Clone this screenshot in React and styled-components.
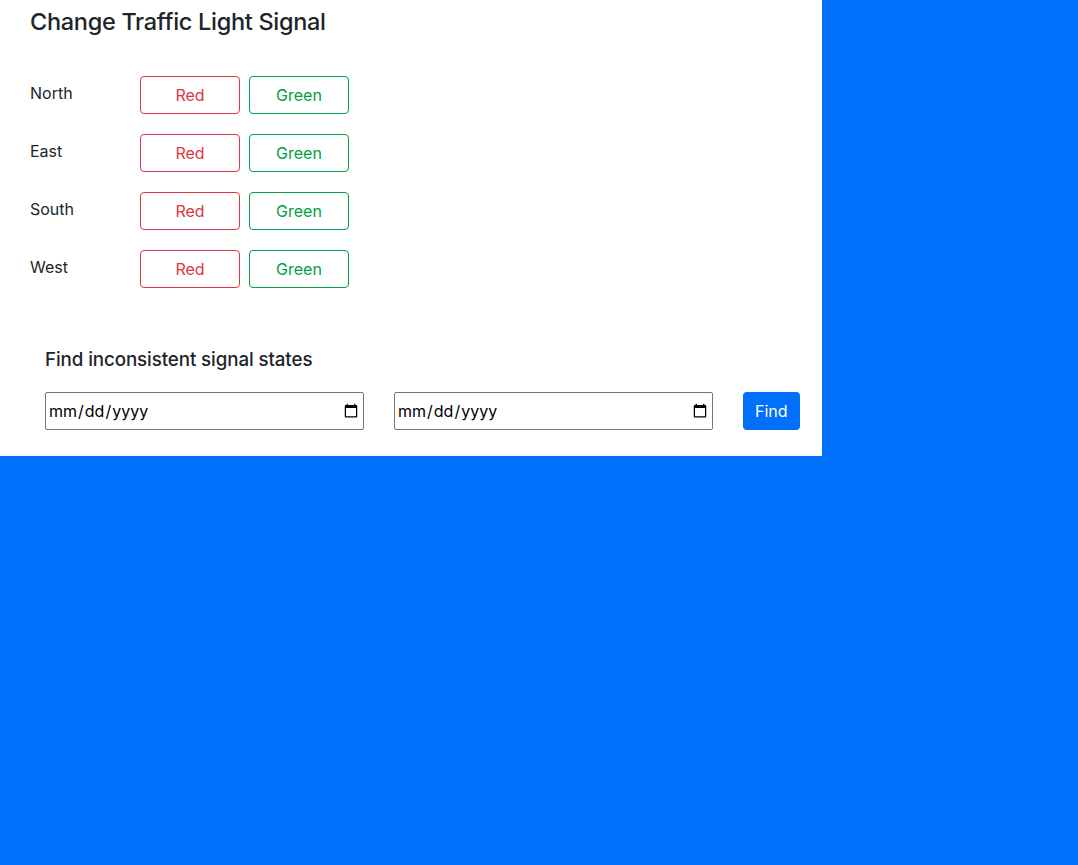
import styled, { createGlobalStyle } from 'styled-components';

const GlobalStyle = createGlobalStyle`
  html, body {
    margin: 0;
    padding: 0;
    background: #0070fa;
    font-family: Inter, "Liberation Sans", sans-serif;
    color: #212529;
  }
`;

const Panel = styled.div`
  width: 822px;
  background: #fff;
  box-sizing: border-box;
  padding: 8px 0 26px 30px;
`;

const Title = styled.h1`
  margin: 0 0 40px;
  font-size: 23.5px;
  font-weight: 500;
  line-height: 28px;
  letter-spacing: -0.3px;
`;

const SignalList = styled.div`
  display: flex;
  flex-direction: column;
  gap: 20px;
`;

const SignalRow = styled.div`
  display: flex;
  align-items: flex-start;
`;

const Direction = styled.span`
  width: 110px;
  padding-top: 5px;
  font-size: 16px;
  line-height: 24px;
`;

const LightButton = styled.button`
  width: 100px;
  height: 38px;
  margin-right: 9px;
  background: #fff;
  border: 1px solid ${(p) => p.$color};
  color: ${(p) => p.$color};
  border-radius: 4px;
  font-family: inherit;
  font-size: 16px;
  cursor: pointer;
`;

const Finder = styled.section`
  margin-top: 60px;
  padding-left: 15px;
`;

const FinderTitle = styled.h2`
  margin: 0 0 20px;
  font-size: 18.75px;
  font-weight: 500;
  line-height: 24px;
  letter-spacing: -0.1px;
`;

const FinderRow = styled.div`
  display: flex;
  align-items: center;
  gap: 30px;
`;

const DateInput = styled.input`
  width: 319px;
  height: 38px;
  box-sizing: border-box;
  border: 1px solid #767676;
  border-radius: 2px;
  padding: 0 2px;
  font-family: Inter, "Liberation Sans", sans-serif;
  font-size: 16px;
  color: #000;
`;

const FindButton = styled.button`
  height: 38px;
  padding: 0 12px;
  border: none;
  border-radius: 4px;
  background: #0070fa;
  color: #fff;
  font-family: inherit;
  font-size: 16px;
  cursor: pointer;
`;

const directions = ['North', 'East', 'South', 'West'];

export default function App() {
  return (
    <>
      <GlobalStyle />
      <Panel>
        <Title>Change Traffic Light Signal</Title>
        <SignalList>
          {directions.map((d) => (
            <SignalRow key={d}>
              <Direction>{d}</Direction>
              <LightButton $color="#dc3545">Red</LightButton>
              <LightButton $color="#00a043">Green</LightButton>
            </SignalRow>
          ))}
        </SignalList>
        <Finder>
          <FinderTitle>Find inconsistent signal states</FinderTitle>
          <FinderRow>
            <DateInput type="date" />
            <DateInput type="date" />
            <FindButton>Find</FindButton>
          </FinderRow>
        </Finder>
      </Panel>
    </>
  );
}
